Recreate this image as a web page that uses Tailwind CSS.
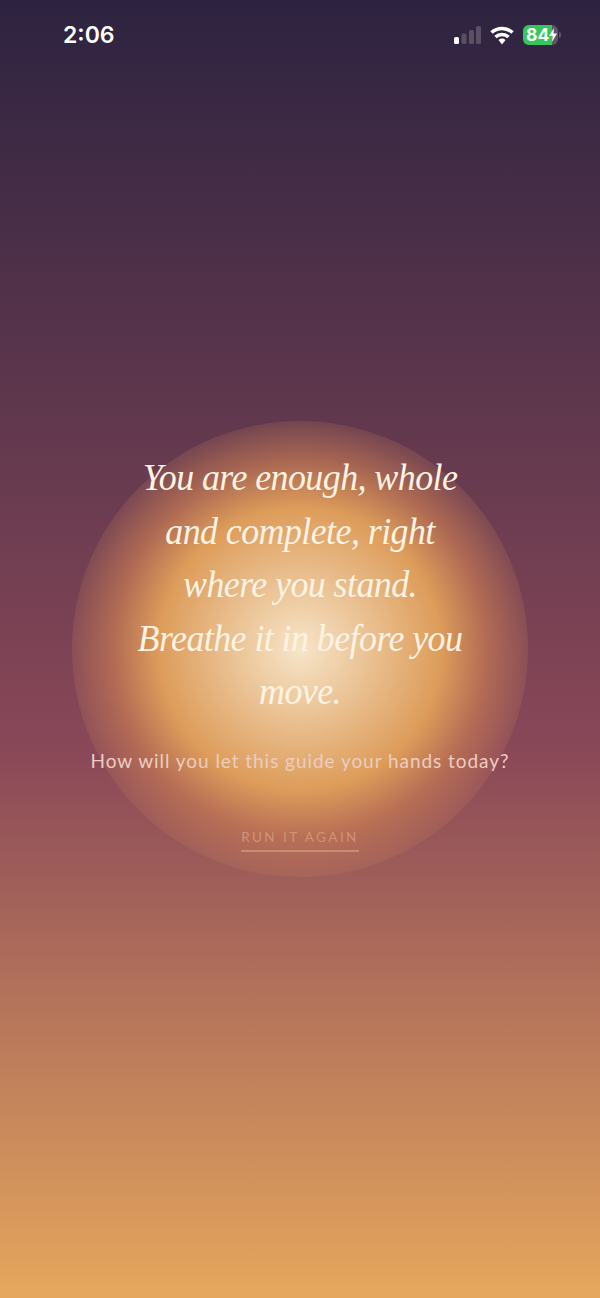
<!DOCTYPE html>
<html lang="en">
<head>
    <meta charset="UTF-8">
    <meta name="viewport" content="width=device-width, initial-scale=1.0">
    <title>Run it again</title>
    <script src="https://cdn.jsdelivr.net/npm/@tailwindcss/browser@4"></script>
</head>
<body class="m-0">
    <div class="relative w-[600px] h-[1298px] overflow-hidden bg-[linear-gradient(180deg,#2d2340_0%,#8a4858_58%,#e6a75d_100%)]">
        <!-- glow circle -->
        <div class="absolute left-[72px] top-[421px] w-[456px] h-[456px] rounded-full bg-[radial-gradient(circle_closest-side,#f7e5c9_0%,#dd9c5a_62%,rgba(198,122,84,0.72)_82%,rgba(205,135,92,0.17)_100%)]"></div>

        <!-- status bar -->
        <div class="relative flex items-center justify-between h-[68px] pt-[2px] pl-[63px] pr-[39px]">
            <span class="text-[23px] font-semibold text-white font-['Inter',sans-serif]">2:06</span>
            <div class="flex items-center gap-[9px]">
                <svg width="27" height="18" viewBox="0 0 27 18">
                    <rect x="0" y="11" width="5" height="7" rx="1.500" fill="#fff"/>
                    <rect x="7.500" y="7.500" width="5" height="10.500" rx="1.500" fill="#5a5064"/>
                    <rect x="15" y="4" width="5" height="14" rx="1.500" fill="#5a5064"/>
                    <rect x="22" y="0" width="5" height="18" rx="1.500" fill="#5a5064"/>
                </svg>
                <svg width="24" height="19" viewBox="0 0 24 19">
                    <path d="M1.500 6.500 A15.500 15.500 0 0 1 22.500 6.500" fill="none" stroke="#fff" stroke-width="3.500"/>
                    <path d="M5.500 11 A9.500 9.500 0 0 1 18.500 11" fill="none" stroke="#fff" stroke-width="3.500"/>
                    <path d="M8.500 14 A5 5 0 0 1 15.500 14 L12 18.500 Z" fill="#fff"/>
                </svg>
                <div class="flex items-center gap-[1px]">
                    <div class="relative w-[35px] h-[20px] rounded-[6px] bg-[#5d5566] overflow-hidden">
                        <div class="absolute inset-y-0 left-0 w-[29px] bg-[#34c759]"></div>
                        <div class="relative flex items-center h-full pl-[3px] text-[17.500px] font-bold leading-none text-white font-['Inter',sans-serif]">84<svg width="8" height="14" viewBox="0 0 8 14"><path d="M5 0 L0 8 H3.500 L3 14 L8 5.500 H4.500 Z" fill="#fff"/></svg></div>
                    </div>
                    <div class="w-[2px] h-[6px] rounded-r-sm bg-[#5d5566]"></div>
                </div>
            </div>
        </div>

        <!-- message -->
        <div class="relative flex flex-col items-center mt-[383px]">
            <p class="w-[352px] scale-x-[0.945] text-center text-[38px] leading-[53.500px] italic tracking-[-0.6px] text-[#fdf3e3] font-['Liberation_Serif',serif]">You are enough, whole and complete, right where you stand. Breathe it in before you move.</p>
            <p class="mt-[28px] text-[19px] tracking-[0.95px] text-[#eccdc0] font-['Lato',sans-serif]">How will you let this guide your hands today?</p>
            <a class="mt-[52px] pb-[3px] border-b-2 border-[#c58d78] text-[13.500px] tracking-[2.450px] text-[#cf9378] font-['Lato',sans-serif]">RUN IT AGAIN</a>
        </div>
    </div>
</body>
</html>
